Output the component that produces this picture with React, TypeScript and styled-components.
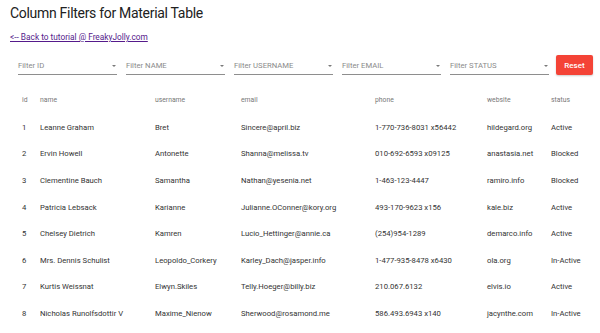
import React from "react";
import styled, { createGlobalStyle } from "styled-components";

const Global = createGlobalStyle`
  html, body { margin: 0; padding: 0; background: #fff; }
  body { font-family: Roboto, "Liberation Sans", sans-serif; }
`;

const Page = styled.div`
  width: 600px;
  height: 333px;
  overflow: hidden;
  padding: 0 0 0 10px;
  box-sizing: border-box;
`;

const Title = styled.h1`
  margin: 0;
  padding-top: 3px;
  font-size: 14px;
  letter-spacing: -0.3px;
  font-weight: 400;
  color: #212121;
  line-height: 20px;
`;

const BackLink = styled.a`
  display: inline-block;
  margin-top: 8px;
  font-size: 8.3px;
  line-height: 12px;
  color: #551a8b;
  text-decoration: underline;
`;

const FilterRow = styled.div`
  display: flex;
  align-items: center;
  gap: 9px;
  margin-top: 10px;
  padding-left: 8px;
  height: 22px;
`;

const Field = styled.div`
  flex: 0 0 99px;
  height: 17px;
  border-bottom: 1px solid #8e8e8e;
  display: flex;
  align-items: center;
  justify-content: space-between;
  box-sizing: border-box;
  padding-right: 1px;
  margin-top: 2px;
`;

const Placeholder = styled.span`
  font-size: 7.7px;
  color: #8a8a8a;
`;

const Caret = styled.span`
  width: 0;
  height: 0;
  border-left: 2.5px solid transparent;
  border-right: 2.5px solid transparent;
  border-top: 2.5px solid #7a7a7a;
`;

const ResetButton = styled.button`
  flex: 0 0 37px;
  height: 20px;
  margin-left: -2px;
  border: none;
  border-radius: 2px;
  background: #f44336;
  color: #fff;
  font-family: Roboto, "Liberation Sans", sans-serif;
  font-size: 8px;
  font-weight: 500;
  padding: 0;
  box-shadow: 0 1px 2px rgba(0,0,0,0.2);
`;

const Table = styled.div`
  margin-top: 10px;
  display: grid;
  grid-template-columns: 12px 18px 115px 86px 134px 112px 64px 1fr;
`;

const Row = styled.div<{ $head?: boolean }>`
  display: contents;
  & > div {
    height: ${(p) => (p.$head ? "28px" : "26.6px")};
    display: flex;
    align-items: center;
    font-size: ${(p) => (p.$head ? "6.8px" : "7.7px")};
    color: ${(p) => (p.$head ? "#777" : "#333")};
    white-space: nowrap;
  }
`;

const Cell = styled.div``;

const rows = [
  ["1", "Leanne Graham", "Bret", "Sincere@april.biz", "1-770-736-8031 x56442", "hildegard.org", "Active"],
  ["2", "Ervin Howell", "Antonette", "Shanna@melissa.tv", "010-692-6593 x09125", "anastasia.net", "Blocked"],
  ["3", "Clementine Bauch", "Samantha", "Nathan@yesenia.net", "1-463-123-4447", "ramiro.info", "Blocked"],
  ["4", "Patricia Lebsack", "Karianne", "Julianne.OConner@kory.org", "493-170-9623 x156", "kale.biz", "Active"],
  ["5", "Chelsey Dietrich", "Kamren", "Lucio_Hettinger@annie.ca", "(254)954-1289", "demarco.info", "Active"],
  ["6", "Mrs. Dennis Schulist", "Leopoldo_Corkery", "Karley_Dach@jasper.info", "1-477-935-8478 x6430", "ola.org", "In-Active"],
  ["7", "Kurtis Weissnat", "Elwyn.Skiles", "Telly.Hoeger@billy.biz", "210.067.6132", "elvis.io", "Active"],
  ["8", "Nicholas Runolfsdottir V", "Maxime_Nienow", "Sherwood@rosamond.me", "586.493.6943 x140", "jacynthe.com", "In-Active"],
];

const filters = ["Filter ID", "Filter NAME", "Filter USERNAME", "Filter EMAIL", "Filter STATUS"];
const heads = ["id", "name", "username", "email", "phone", "website", "status"];

export default function App() {
  return (
    <Page>
      <Global />
      <Title>Column Filters for Material Table</Title>
      <BackLink href="#">&lt;-- Back to tutorial @ FreakyJolly.com</BackLink>
      <FilterRow>
        {filters.map((f) => (
          <Field key={f}>
            <Placeholder>{f}</Placeholder>
            <Caret />
          </Field>
        ))}
        <ResetButton>Reset</ResetButton>
      </FilterRow>
      <Table>
        <Row $head>
          <Cell />
          {heads.map((h) => (
            <Cell key={h}>{h}</Cell>
          ))}
        </Row>
        {rows.map((r) => (
          <Row key={r[0]}>
            <Cell />
            {r.map((c, i) => (
              <Cell key={i}>{c}</Cell>
            ))}
          </Row>
        ))}
      </Table>
    </Page>
  );
}
